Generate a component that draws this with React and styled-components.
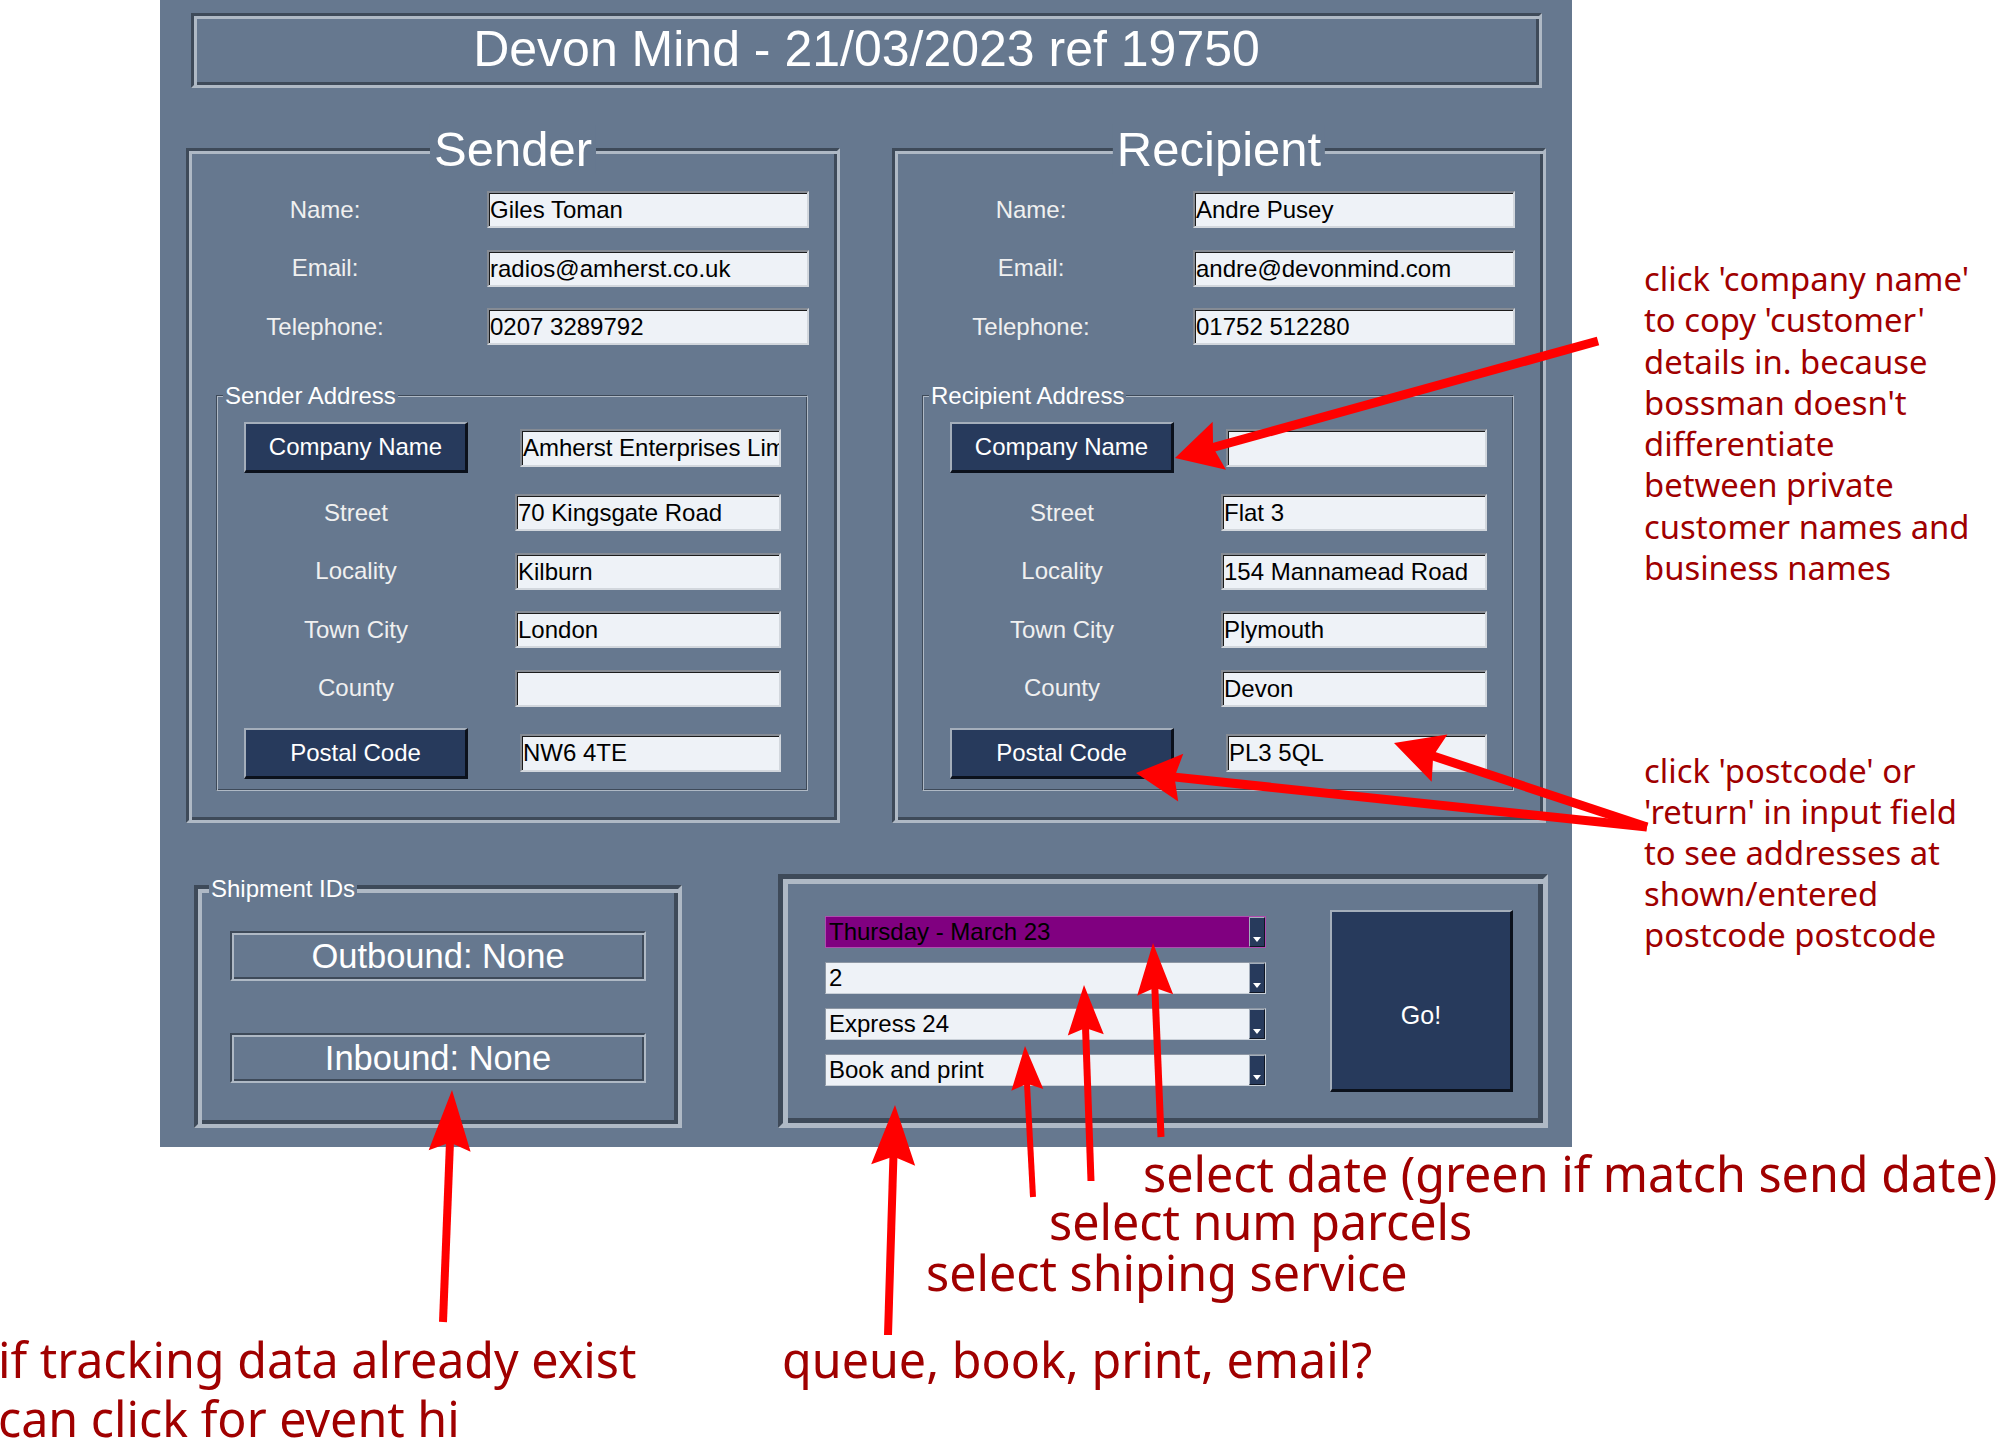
import React from 'react';
import styled, { createGlobalStyle, css } from 'styled-components';

const SLATE = '#66788f';
const DARK = '#3e4a59';
const LIGHT = '#afb9c5';
const NAVY = '#273a5c';
const FIELD = '#eef2f7';
const NOTE = '#a00000';
const UI_FONT = "'Liberation Sans', Arial, sans-serif";
const NOTE_FONT = "'Noto Sans', 'Open Sans', sans-serif";

const GlobalStyle = createGlobalStyle`
  html, body {
    margin: 0;
    padding: 0;
    background: #fff;
  }
  body {
    font-family: ${UI_FONT};
  }
  * {
    box-sizing: border-box;
  }
`;

// tk style groove: dark outer top/left, light inner; reversed on bottom/right
const groove = (w) => css`
  border: ${w}px solid;
  border-color: ${DARK} ${LIGHT} ${LIGHT} ${DARK};
  box-shadow: inset ${w}px ${w}px 0 ${LIGHT}, inset -${w}px -${w}px 0 ${DARK};
`;

const raised = css`
  border-style: solid;
  border-width: 2px 3px 3px 2px;
  border-color: #a4aebb #0b111c #0b111c #a4aebb;
`;

const Canvas = styled.div`
  position: relative;
  width: 2000px;
  height: 1440px;
  overflow: hidden;
  background: #fff;
`;

const Panel = styled.main`
  margin-left: 160px;
  width: 1412px;
  height: 1147px;
  background: ${SLATE};
  display: flex;
  flex-direction: column;
`;

const TitleBar = styled.h1`
  margin: 13px 30px 0 31px;
  height: 75px;
  ${groove(3)};
  display: flex;
  align-items: center;
  justify-content: center;
  padding-bottom: 4px;
  font-size: 50px;
  font-weight: normal;
  line-height: 1;
  color: #fff;
`;

const FrameRow = styled.div`
  display: flex;
  gap: 52px;
  margin: 60px 0 0 26px;
`;

const Frame = styled.section`
  position: relative;
  width: 654px;
  height: 675px;
  ${groove(3)};
  padding-top: 40px;
`;

const Legend = styled.span`
  position: absolute;
  top: ${p => p.$top ?? 0}px;
  left: ${p => (p.$center ? '50%' : `${p.$left}px`)};
  transform: translate(${p => (p.$center ? '-50%' : '0')}, -50%);
  padding: 0 ${p => (p.$center ? 4 : 2)}px;
  background: ${SLATE};
  color: #fff;
  font-size: ${p => p.$size}px;
  line-height: 1;
  white-space: nowrap;
`;

const InfoGrid = styled.div`
  display: grid;
  grid-template-columns: 272px 322px;
  grid-auto-rows: 37px;
  column-gap: 26px;
  row-gap: 21.5px;
  align-items: center;
`;

const FieldLabel = styled.span`
  text-align: center;
  font-size: 24px;
  color: #f0f0f0;
`;

const Entry = styled.div`
  height: ${p => (p.$inset ? 38 : 37)}px;
  margin-left: ${p => (p.$inset ? 5 : 0)}px;
  align-self: center;
  background: ${FIELD};
  border: 2px solid;
  border-color: #858b94 #d2d7dd #d2d7dd #858b94;
  box-shadow: inset 1px 1px 0 #1c1c1c;
  padding-left: 1px;
  font-size: 24px;
  line-height: ${p => (p.$inset ? 34 : 33)}px;
  color: #000;
  white-space: nowrap;
  overflow: hidden;
`;

const AddressFrame = styled.div`
  position: relative;
  width: 592px;
  height: 396px;
  margin: 50px 0 0 27px;
  ${groove(1)};
  padding: 26px 0 0 27px;
`;

const AddressGrid = styled.div`
  display: grid;
  grid-template-columns: 224px 266px;
  grid-template-rows: 51px repeat(4, 37px) 51px;
  column-gap: 47px;
  row-gap: 21.4px;
  align-items: center;
`;

const ActionButton = styled.button`
  width: 224px;
  height: 51px;
  background: ${NAVY};
  ${raised};
  padding: 0;
  color: #fff;
  font: 24px ${UI_FONT};
  cursor: pointer;
`;

const BottomRow = styled.div`
  display: flex;
  align-items: flex-end;
  gap: 96px;
  margin: 51px 0 0 34px;
`;

const ShipmentFrame = styled.section`
  position: relative;
  width: 488px;
  height: 243px;
  ${groove(4)};
  padding: 42px 0 0 32px;
  display: flex;
  flex-direction: column;
  gap: 52px;
`;

const IdBox = styled.div`
  width: 416px;
  height: 50px;
  ${groove(2)};
  display: flex;
  align-items: center;
  justify-content: center;
  color: #fff;
  font-size: 34.5px;
  line-height: 1;
`;

const ActionFrame = styled.section`
  width: 770px;
  height: 254px;
  ${groove(5)};
  padding-left: 42px;
  display: flex;
  align-items: center;
  gap: 64px;
`;

const PickerColumn = styled.div`
  display: flex;
  flex-direction: column;
  gap: 14px;
`;

const Picker = styled.div`
  display: flex;
  width: 441px;
  height: 32px;
  background: ${p => p.$bg};
  border: 1px solid;
  border-color: ${p => p.$edge};
`;

const PickerText = styled.span`
  flex: 1;
  padding-left: 3px;
  font-size: 24px;
  line-height: 30px;
  color: #000;
  white-space: nowrap;
  overflow: hidden;
`;

const PickerToggle = styled.span`
  width: 16px;
  background: ${NAVY};
  border: 1px solid;
  border-color: #a4aebb #0f1624 #0f1624 #a4aebb;
  display: flex;
  align-items: flex-end;
  justify-content: center;
  padding-bottom: 4px;

  &::after {
    content: '';
    border-left: 4px solid transparent;
    border-right: 4px solid transparent;
    border-top: 5px solid #fff;
  }
`;

const GoButton = styled.button`
  width: 183px;
  height: 182px;
  background: ${NAVY};
  ${raised};
  padding: 29px 0 0;
  color: #fff;
  font: 25px ${UI_FONT};
  cursor: pointer;
`;

const Note = styled.p`
  position: absolute;
  left: ${p => p.$x}px;
  top: ${p => p.$y}px;
  margin: 0;
  font-family: ${NOTE_FONT};
  font-size: ${p => p.$size}px;
  line-height: ${p => p.$lh}px;
  color: ${NOTE};
  white-space: nowrap;
`;

const ArrowLayer = styled.svg`
  position: absolute;
  left: 0;
  top: 0;
  width: 2000px;
  height: 1440px;
  pointer-events: none;
`;

const sender = {
  title: 'Sender',
  info: [
    ['Name:', 'Giles Toman'],
    ['Email:', 'radios@amherst.co.uk'],
    ['Telephone:', '0207 3289792'],
  ],
  address: 'Sender Address',
  company: 'Amherst Enterprises Limited',
  lines: [
    ['Street', '70 Kingsgate Road'],
    ['Locality', 'Kilburn'],
    ['Town City', 'London'],
    ['County', ''],
  ],
  postcode: 'NW6 4TE',
};

const recipient = {
  title: 'Recipient',
  info: [
    ['Name:', 'Andre Pusey'],
    ['Email:', 'andre@devonmind.com'],
    ['Telephone:', '01752 512280'],
  ],
  address: 'Recipient Address',
  company: '',
  lines: [
    ['Street', 'Flat 3'],
    ['Locality', '154 Mannamead Road'],
    ['Town City', 'Plymouth'],
    ['County', 'Devon'],
  ],
  postcode: 'PL3 5QL',
};

const pickers = [
  { text: 'Thursday - March 23', bg: '#800080', edge: '#b04cb0' },
  { text: '2', bg: FIELD, edge: '#8d97a4 #c9d0d8 #c9d0d8 #8d97a4' },
  { text: 'Express 24', bg: FIELD, edge: '#8d97a4 #c9d0d8 #c9d0d8 #8d97a4' },
  { text: 'Book and print', bg: FIELD, edge: '#8d97a4 #c9d0d8 #c9d0d8 #8d97a4' },
];

const arrows = [
  { tail: [1598, 341], tip: [1175, 458], len: 46, hw: 25, w: 9 },
  { tail: [1647, 827], tip: [1136, 773], len: 45, hw: 24, w: 9 },
  { tail: [1647, 827], tip: [1394, 743], len: 48, hw: 25, w: 9 },
  { tail: [443, 1322], tip: [452, 1090], len: 61, hw: 21, w: 8 },
  { tail: [888, 1335], tip: [895, 1105], len: 60, hw: 22, w: 8 },
  { tail: [1033, 1197], tip: [1025, 1046], len: 44, hw: 16, w: 6 },
  { tail: [1091, 1181], tip: [1084, 985], len: 50, hw: 18, w: 7 },
  { tail: [1161, 1137], tip: [1153, 943], len: 52, hw: 18, w: 7 },
];

const Arrow = ({ tail, tip, len, hw, w }) => {
  const dx = tip[0] - tail[0];
  const dy = tip[1] - tail[1];
  const d = Math.hypot(dx, dy);
  const ux = dx / d;
  const uy = dy / d;
  const bx = tip[0] - ux * len;
  const by = tip[1] - uy * len;
  const nx = -uy * hw;
  const ny = ux * hw;
  const notchX = bx + ux * len * 0.14;
  const notchY = by + uy * len * 0.14;
  const head = `M${tip[0]} ${tip[1]} L${bx + nx} ${by + ny} L${notchX} ${notchY} L${bx - nx} ${by - ny} Z`;
  return (
    <g>
      <line x1={tail[0]} y1={tail[1]} x2={notchX + ux * 4} y2={notchY + uy * 4} stroke="#ff0000" strokeWidth={w} />
      <path d={head} fill="#ff0000" />
    </g>
  );
};

const PartyFrame = ({ party }) => (
  <Frame>
    <Legend $center $top={-2} $size={49}>{party.title}</Legend>
    <InfoGrid>
      {party.info.map(([label, value]) => (
        <React.Fragment key={label}>
          <FieldLabel>{label}</FieldLabel>
          <Entry>{value}</Entry>
        </React.Fragment>
      ))}
    </InfoGrid>
    <AddressFrame>
      <Legend $left={6} $size={24}>{party.address}</Legend>
      <AddressGrid>
        <ActionButton>Company Name</ActionButton>
        <Entry $inset>{party.company}</Entry>
        {party.lines.map(([label, value]) => (
          <React.Fragment key={label}>
            <FieldLabel>{label}</FieldLabel>
            <Entry>{value}</Entry>
          </React.Fragment>
        ))}
        <ActionButton>Postal Code</ActionButton>
        <Entry $inset>{party.postcode}</Entry>
      </AddressGrid>
    </AddressFrame>
  </Frame>
);

export default function App() {
  return (
    <>
      <GlobalStyle />
      <Canvas>
        <Panel>
          <TitleBar>Devon Mind - 21/03/2023 ref 19750</TitleBar>
          <FrameRow>
            <PartyFrame party={sender} />
            <PartyFrame party={recipient} />
          </FrameRow>
          <BottomRow>
            <ShipmentFrame>
              <Legend $left={11} $size={24}>Shipment IDs</Legend>
              <IdBox>Outbound: None</IdBox>
              <IdBox>Inbound: None</IdBox>
            </ShipmentFrame>
            <ActionFrame>
              <PickerColumn>
                {pickers.map(p => (
                  <Picker key={p.text} $bg={p.bg} $edge={p.edge}>
                    <PickerText>{p.text}</PickerText>
                    <PickerToggle />
                  </Picker>
                ))}
              </PickerColumn>
              <GoButton>Go!</GoButton>
            </ActionFrame>
          </BottomRow>
        </Panel>

        <Note $x={1644} $y={258} $size={32.8} $lh={41.3}>
          click 'company name'<br />
          to copy 'customer'<br />
          details in. because<br />
          bossman doesn't<br />
          differentiate<br />
          between private<br />
          customer names and<br />
          business names
        </Note>
        <Note $x={1644} $y={750} $size={32.8} $lh={41}>
          click 'postcode' or<br />
          'return' in input field<br />
          to see addresses at<br />
          shown/entered<br />
          postcode postcode
        </Note>
        <Note $x={1143} $y={1149} $size={48.4} $lh={48}>select date (green if match send date)</Note>
        <Note $x={1049} $y={1197} $size={48.4} $lh={48}>select num parcels</Note>
        <Note $x={926} $y={1248} $size={48.4} $lh={48}>select shiping service</Note>
        <Note $x={782} $y={1335} $size={48.4} $lh={48}>queue, book, print, email?</Note>
        <Note $x={-2} $y={1330} $size={48.4} $lh={59}>
          if tracking data already exist<br />
          can click for event hi
        </Note>

        <ArrowLayer viewBox="0 0 2000 1440">
          {arrows.map((a, i) => (
            <Arrow key={i} {...a} />
          ))}
        </ArrowLayer>
      </Canvas>
    </>
  );
}
